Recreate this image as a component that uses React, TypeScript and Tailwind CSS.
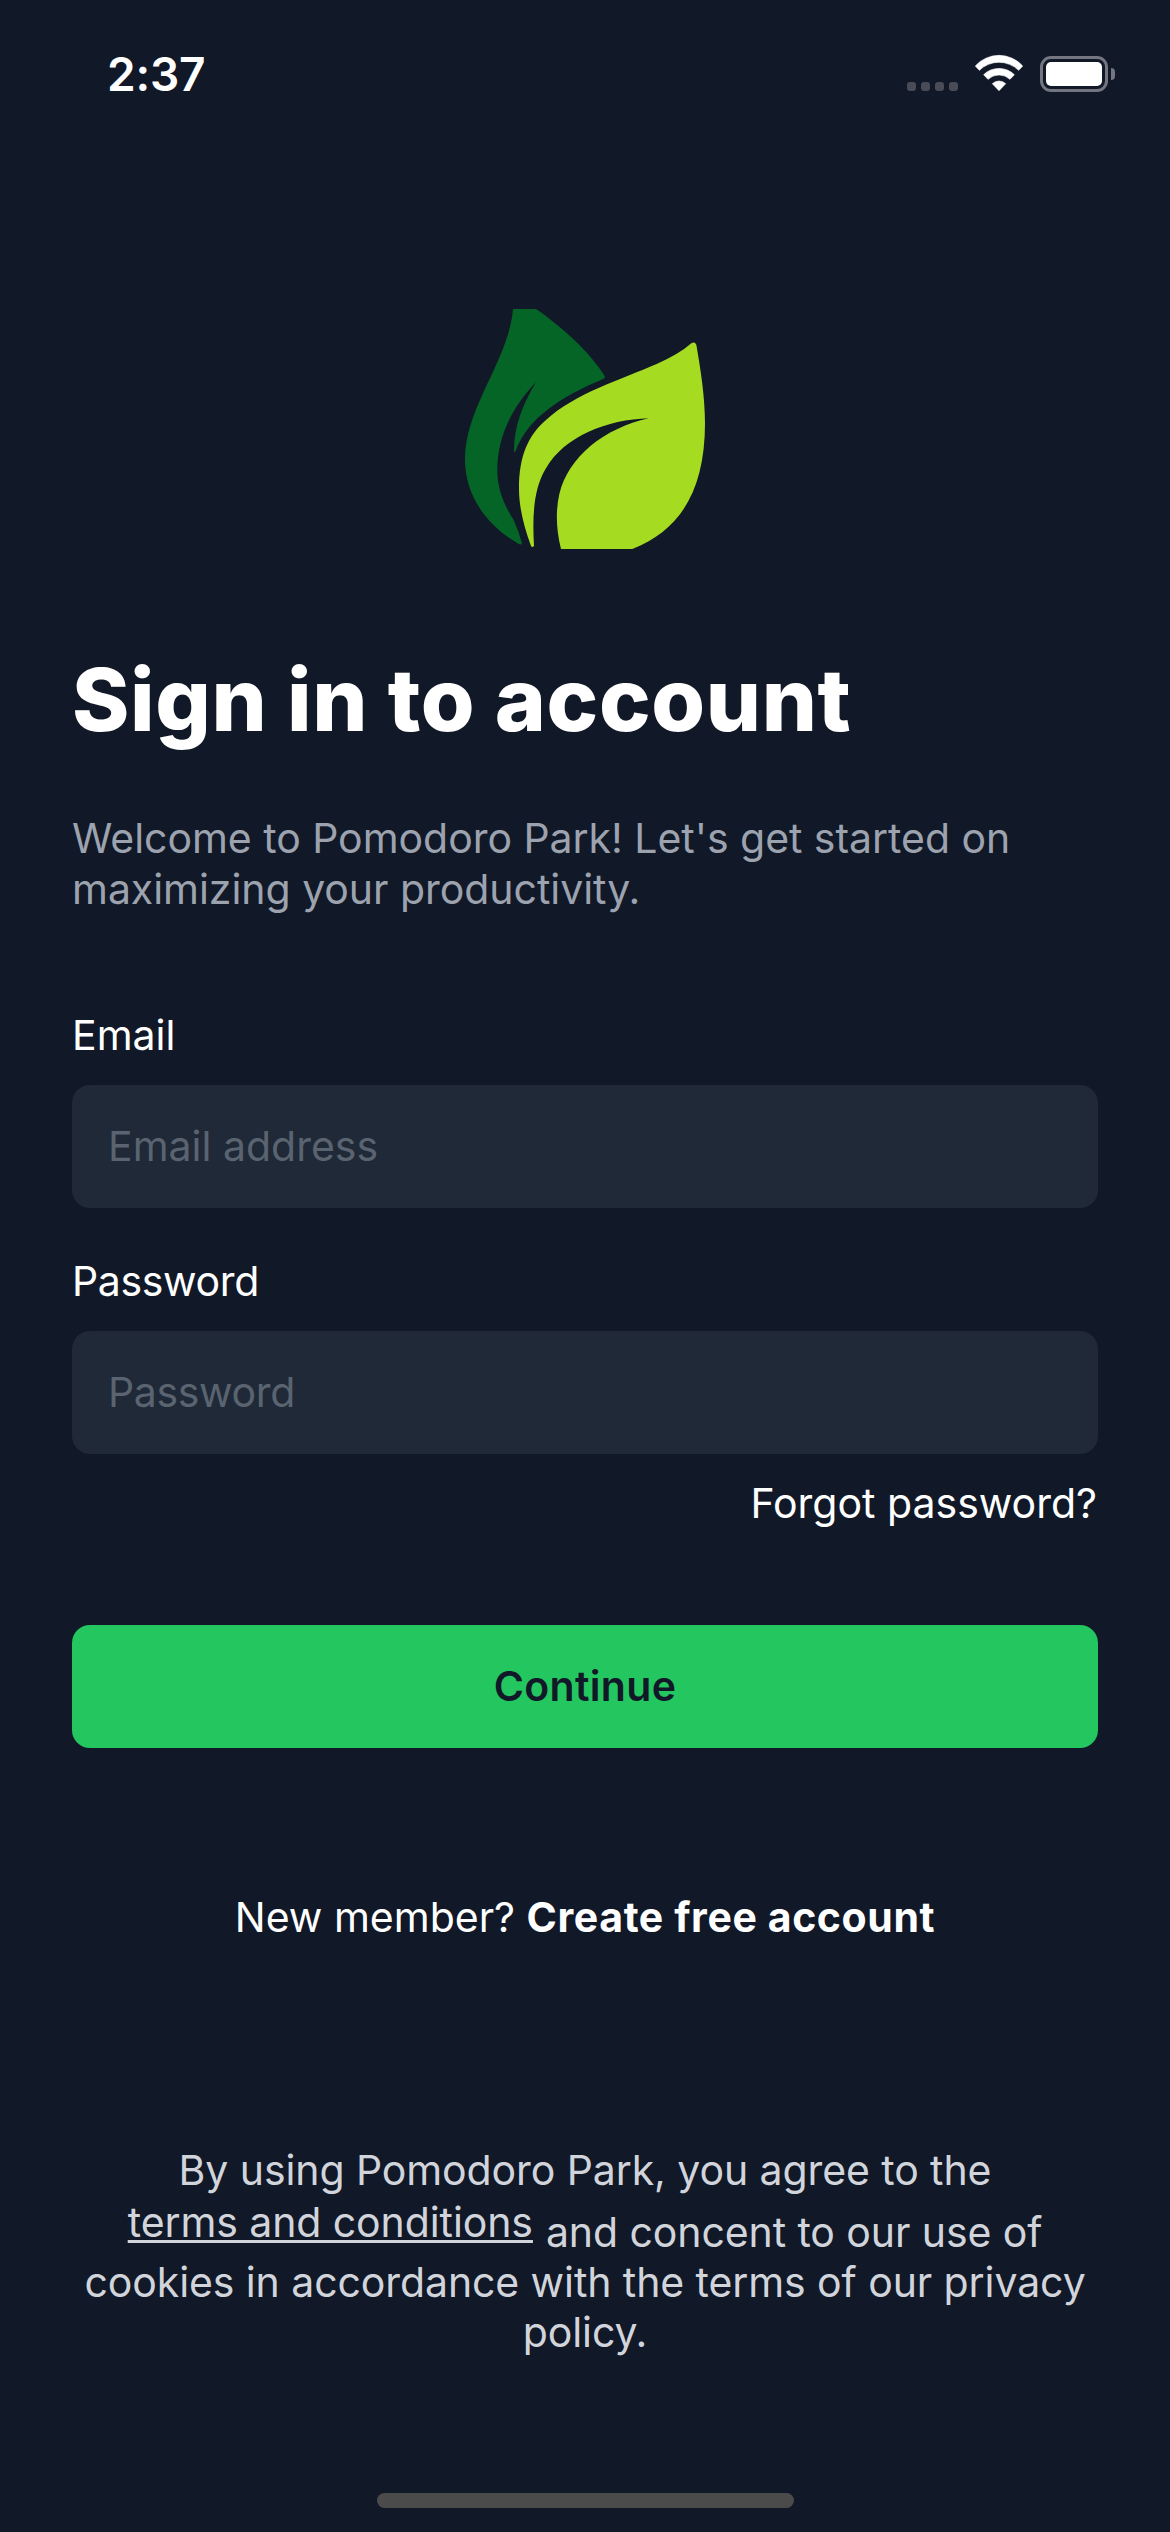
import type { ReactNode } from "react";

function LeafLogo() {
  return (
    <svg className="h-[240px] w-[240px]" viewBox="75 57 720 720" aria-hidden="true">
      <path
        fill="#056526"
        d="M219 57H288C370 114 450 187 494 258Q497 265 488 268C365 319 262 385 227 483Q222 490 222 480C222 410 249 340 288 277C220 348 172 435 172 540C172 600 194 647 221 690Q237 726 245 757Q247 766 238 763C143 709 75 620 75 508C75 350 206 212 219 57Z"
      />
      <path
        fill="#a5dc22"
        d="M754 160Q764 153 769 164C782 240 795 320 795 400C795 600 722 720 577 777H363C349 722 346 665 358 612C385 502 490 415 627 385C500 389 375 438 317 536C280 598 277 680 282 767Q278 775 273 768C250 705 237 650 237 595C237 500 264 436 318 390C405 310 545 268 650 222Q718 192 754 160Z"
      />
    </svg>
  );
}

function WifiIcon() {
  return (
    <svg
      className="h-[38px] w-[50px]"
      viewBox="282 42 150 114"
      fill="white"
      stroke="white"
      strokeWidth="2"
      strokeLinejoin="round"
      aria-hidden="true"
    >
      <path d="M286 78A95 95 0 0 1 428 78L416 91A84 84 0 0 0 298 91Z" />
      <path d="M311 104A66 66 0 0 1 403 104L390 118A48 48 0 0 0 324 118Z" />
      <path d="M337 131A29 29 0 0 1 377 131L357 152Z" />
    </svg>
  );
}

function Battery() {
  return (
    <div className="flex items-center gap-[3px]">
      <div className="h-9 w-[68px] rounded-[11px] border-3 border-[#737680] p-[3px]">
        <div className="h-full w-full rounded-[5px] bg-white" />
      </div>
      <div className="h-3 w-1 rounded-r-full bg-[#737680]" />
    </div>
  );
}

function StatusBar() {
  return (
    <div className="flex h-[148px] items-start justify-between pl-[107px] pr-[55px] pt-[54px]">
      <div className="mt-[-9px] text-[46px] leading-[58px] font-semibold tracking-[-0.2px]">2:37</div>
      <div className="flex">
        <div className="mt-7 mr-[16px] flex h-[9px] gap-[5px]">
          {[0, 1, 2, 3].map((i) => (
            <div key={i} className="size-[9px] rounded-[3px] bg-[#494b57]" />
          ))}
        </div>
        <WifiIcon />
        <div className="ml-4 pt-[2px]">
          <Battery />
        </div>
      </div>
    </div>
  );
}

function Field({ label, type, placeholder }: { label: string; type: string; placeholder: string }) {
  return (
    <label className="block">
      <span className="block h-[75px]">{label}</span>
      <input
        type={type}
        placeholder={placeholder}
        className="block h-[123px] w-full rounded-[18px] bg-[#1f2937] px-9 pb-px placeholder:text-[#5a6370] placeholder:opacity-100"
      />
    </label>
  );
}

function Line({ children }: { children: ReactNode }) {
  return <span className="block whitespace-nowrap">{children}</span>;
}

export default function App() {
  return (
    <div className="flex h-[2532px] w-[1170px] flex-col overflow-hidden bg-[#111827] font-[Inter,sans-serif] text-[41px] leading-[50px] text-white">
      <StatusBar />

      <main className="flex flex-col px-[72px] pt-[161px]">
        <div className="flex justify-center">
          <LeafLogo />
        </div>

        <h1 className="mt-[100px] text-[87px] leading-[101px] font-extrabold tracking-[0.6px]">
          Sign in to account
        </h1>
        <p className="mt-[63px] leading-[51px] tracking-[-0.04px] text-[#9ca3af]">
          <Line>Welcome to Pomodoro Park! Let's get started on</Line>
          <Line>maximizing your productivity.</Line>
        </p>

        <form className="mt-[95px] flex flex-col">
          <div className="flex flex-col gap-12">
            <Field label="Email" type="email" placeholder="Email address" />
            <div className="tracking-[-0.35px]">
              <Field label="Password" type="password" placeholder="Password" />
            </div>
          </div>
          <a className="mt-6 self-end pr-px">Forgot password?</a>
          <button
            type="button"
            className="mt-[97px] h-[123px] w-full rounded-[18px] bg-[#24c65f] pb-px font-semibold tracking-[0.33px] text-[#111827]"
          >
            Continue
          </button>
        </form>

        <p className="mt-36 text-center whitespace-nowrap">
          New member? <a className="font-bold tracking-[0.6px]">Create free account</a>
        </p>

        <p className="mt-[203px] text-center tracking-[-0.09px] text-[#d1d5db]">
          <Line>By using Pomodoro Park, you agree to the</Line>
          <span className="flex h-[62px] justify-center gap-[13px] pt-[2px] whitespace-nowrap">
            <a className="underline decoration-3 underline-offset-[3px] [text-decoration-skip-ink:none]">
              terms and conditions
            </a>
            <span className="mt-[10px]">and concent to our use of</span>
          </span>
          <Line>cookies in accordance with the terms of our privacy</Line>
          <Line>policy.</Line>
        </p>
      </main>

      <div className="mx-auto mt-auto mb-6 h-[15px] w-[417px] rounded-full bg-[#4b4b4b]" />
    </div>
  );
}
